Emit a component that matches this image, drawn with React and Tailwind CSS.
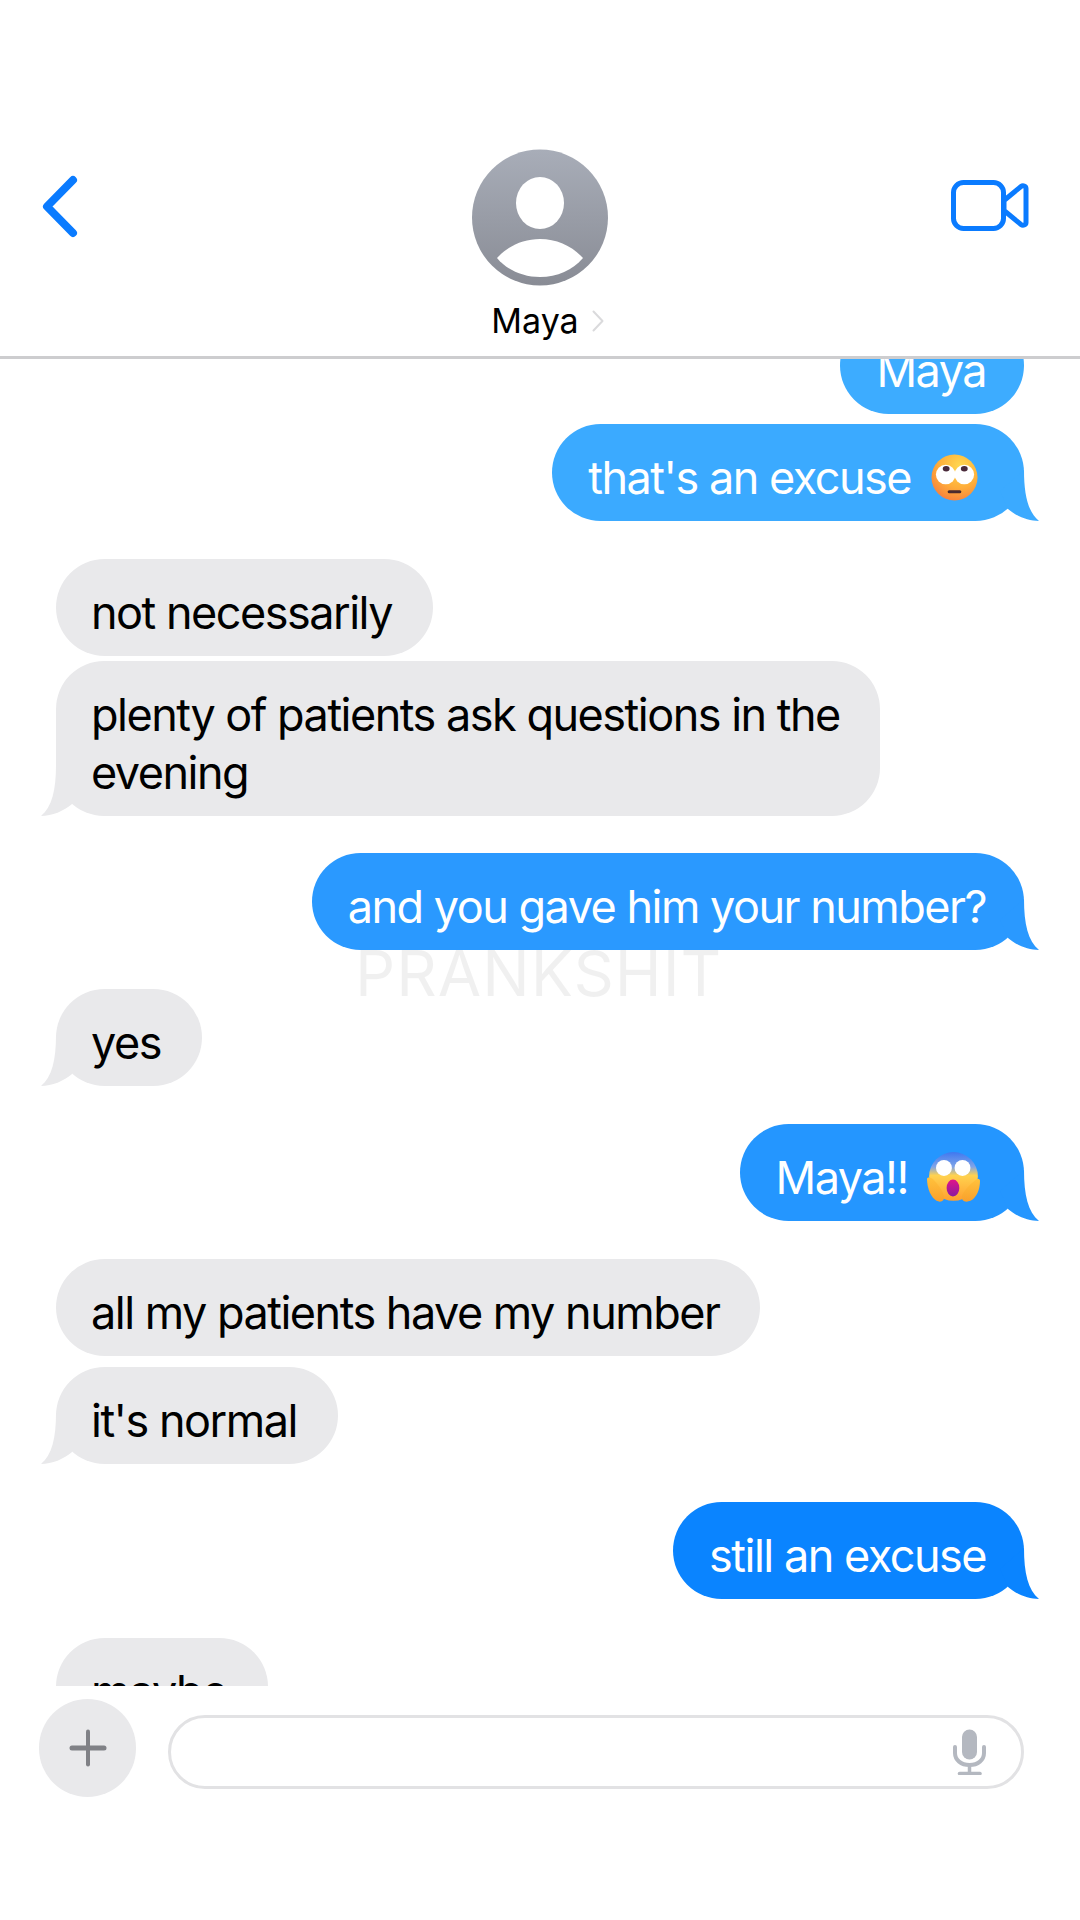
import React from "react";

function Tail({ side, fill }) {
  const pos = side === "right" ? "-right-[16px] bottom-0" : "-left-[16px] bottom-0 -scale-x-100";
  return (
    <svg viewBox="0 0 40 60" width="40" height="60" className={`absolute ${pos} ${fill}`}>
      <path d="M24 9C24 34 28 51 39 60C28 60 16 55 8 48L0 30Z" />
    </svg>
  );
}

function RollEyes() {
  return (
    <svg viewBox="0 0 48 48" width="47" height="47" className="ml-[20px] mr-[8px] shrink-0">
      <defs>
        <radialGradient id="re" cx="0.62" cy="0.25" r="0.85">
          <stop offset="0" stopColor="#FFD84F" />
          <stop offset="0.55" stopColor="#FFAE3A" />
          <stop offset="0.88" stopColor="#F8873C" />
          <stop offset="1" stopColor="#F06A7A" />
        </radialGradient>
      </defs>
      <circle cx="24" cy="24" r="23.5" fill="url(#re)" />
      <circle cx="15" cy="21" r="10" fill="#fff" />
      <circle cx="34" cy="21" r="10" fill="#fff" />
      <ellipse cx="15.5" cy="15" rx="3.5" ry="2.8" fill="#4A2A3A" />
      <ellipse cx="34" cy="15" rx="3.5" ry="2.8" fill="#4A2A3A" />
      <rect x="17" y="37" width="14" height="3.2" rx="1.6" fill="#4A2A2E" />
    </svg>
  );
}

function Scream() {
  return (
    <svg viewBox="0 0 50 50" width="53" height="53" className="ml-[19px] mr-[6px] shrink-0">
      <defs>
        <linearGradient id="sf" x1="0" y1="0" x2="0" y2="1">
          <stop offset="0" stopColor="#3F78F0" />
          <stop offset="0.3" stopColor="#7FA4E8" />
          <stop offset="0.48" stopColor="#FFD24F" />
          <stop offset="1" stopColor="#FF9F2E" />
        </linearGradient>
        <linearGradient id="sm" x1="0" y1="0" x2="0" y2="1">
          <stop offset="0" stopColor="#E0148A" />
          <stop offset="1" stopColor="#8A1AA0" />
        </linearGradient>
        <linearGradient id="sh" x1="0" y1="0" x2="0" y2="1">
          <stop offset="0" stopColor="#FFC23C" />
          <stop offset="1" stopColor="#F9A02C" />
        </linearGradient>
      </defs>
      <circle cx="25" cy="24" r="23" fill="url(#sf)" />
      <circle cx="16" cy="16" r="7.5" fill="#fff" />
      <circle cx="33.500" cy="16" r="7.5" fill="#fff" />
      <ellipse cx="24.500" cy="35" rx="6" ry="8" fill="url(#sm)" />
      <path d="M0 26C1 24 4 25 6 27C10 31 14 36 16 42C17 47 13 49 9 47C4 44 0 36 0 26Z" fill="url(#sh)" />
      <path d="M50 28C50 26 47 26 45 28C40 32 35 37 33 42C32 47 36 49 41 47C47 44 50 36 50 28Z" fill="url(#sh)" />
    </svg>
  );
}

const messages = [
  { side: "right", text: "Maya", bg: "bg-[#3DACFF]", fill: "fill-[#3DACFF]", mt: "-mt-[42px]" },
  { side: "right", text: "that's an excuse", emoji: <RollEyes />, bg: "bg-[#3BAAFF]", fill: "fill-[#3BAAFF]", mt: "mt-[10px]", tail: true },
  { side: "left", text: "not necessarily", mt: "mt-[38px]" },
  { side: "left", lines: ["plenty of patients ask questions in the", "evening"], mt: "mt-[5px]", tail: true },
  { side: "right", text: "and you gave him your number?", bg: "bg-[#2A99FF]", fill: "fill-[#2A99FF]", mt: "mt-[37px]", tail: true },
  { side: "left", text: "yes", mt: "mt-[39px]", tail: true },
  { side: "right", text: "Maya!!", emoji: <Scream />, bg: "bg-[#2496FF]", fill: "fill-[#2496FF]", mt: "mt-[38px]", tail: true },
  { side: "left", text: "all my patients have my number", mt: "mt-[38px]" },
  { side: "left", text: "it's normal", mt: "mt-[11px]", tail: true },
  { side: "right", text: "still an excuse", bg: "bg-[#0A84FF]", fill: "fill-[#0A84FF]", mt: "mt-[38px]", tail: true },
  { side: "left", text: "maybe", mt: "mt-[39px]" },
];

function Bubble({ m }) {
  const isRight = m.side === "right";
  const color = isRight ? `${m.bg} text-white self-end pl-[36px] pr-[38px]` : "bg-[#E9E9EB] text-black self-start pl-[35px] pr-[41px]";
  const size = m.lines
    ? "w-[824px] pt-[25px] pb-[15px] leading-[57.5px] rounded-[48px]"
    : "h-[97px] pt-[10px] flex items-center rounded-[48.5px] leading-[57px]";
  return (
    <div className={`relative shrink-0 text-[45px] tracking-[-1.5px] whitespace-nowrap ${color} ${size} ${m.mt}`}>
      {m.tail && <Tail side={m.side} fill={isRight ? m.fill : "fill-[#E9E9EB]"} />}
      {m.lines ? (
        m.lines.map((l) => (
          <div key={l} className="relative">
            {l}
          </div>
        ))
      ) : (
        <span className="relative">{m.text}</span>
      )}
      {m.emoji}
    </div>
  );
}

export default function App() {
  return (
    <div className="relative w-[1080px] h-[1920px] bg-white overflow-hidden flex flex-col font-['Inter','Liberation_Sans',sans-serif]">
      <header className="h-[359px] shrink-0 border-b-[3px] border-[#CDCDCF] pt-[149px] px-[38px] grid grid-cols-[1fr_auto_1fr]">
        <div className="justify-self-start">
          <svg viewBox="0 0 44 70" width="44" height="70" className="mt-[23px]" fill="none" stroke="#0A7BFF" strokeWidth="8" strokeLinecap="round" strokeLinejoin="round">
            <path d="M35 8L9 34.500L35 61" />
          </svg>
        </div>
        <div className="flex flex-col items-center">
          <svg viewBox="0 0 136 137" width="136" height="137">
            <defs>
              <linearGradient id="av" x1="0" y1="0" x2="0" y2="1">
                <stop offset="0" stopColor="#A8ADB8" />
                <stop offset="1" stopColor="#898C95" />
              </linearGradient>
            </defs>
            <circle cx="68" cy="68.5" r="68" fill="url(#av)" />
            <ellipse cx="68" cy="54" rx="24" ry="26" fill="#fff" />
            <path d="M25 109C36 97 51 90 68 90C85 90 100 97 111 109C101 121 85 128 68 128C51 128 35 121 25 109Z" fill="#fff" />
          </svg>
          <div className="mt-[14px] ml-[15px] flex items-center gap-[13px] text-[34px] leading-[42px] text-black">
            <span>Maya</span>
            <svg viewBox="0 0 12 22" width="12" height="22" fill="none" stroke="#DADADC" strokeWidth="2" strokeLinecap="round" strokeLinejoin="round">
              <path d="M1.500 1.500L10.500 11L1.500 20.500" />
            </svg>
          </div>
        </div>
        <div className="justify-self-end">
          <svg viewBox="0 0 78 52" width="78" height="52" className="mt-[31px] mr-[13px]" fill="none" stroke="#0A7BFF" strokeWidth="5" strokeLinejoin="round">
            <rect x="2.500" y="2.500" width="50" height="46" rx="10" />
            <path d="M53 20.500L70 6.500C72 5 75 6 75 8.500V42.500C75 45 72 46 70 44.500L53 30.500Z" />
          </svg>
        </div>
      </header>

      <main className="h-[1327px] shrink-0 overflow-hidden flex flex-col px-[56px]">
        {messages.map((m, i) => (
          <Bubble key={i} m={m} />
        ))}
      </main>

      <footer className="flex items-center pl-[39px] pr-[56px] pt-[13px] gap-[32px]">
        <div className="w-[97px] h-[98px] rounded-full bg-[#E9E9EB] flex items-center justify-center shrink-0">
          <svg viewBox="0 0 38 38" width="38" height="38" fill="#808186">
            <rect x="0.500" y="16.500" width="37" height="5" rx="2.500" />
            <rect x="17" y="0.500" width="4" height="37" rx="2" />
          </svg>
        </div>
        <div className="flex-1 h-[74px] mt-[8px] rounded-full border-[3px] border-[#E2E2E4] flex items-center justify-end pr-[34px]">
          <svg viewBox="0 0 34 46" width="34" height="46" fill="none" stroke="#B4B8C0">
            <rect x="9" y="0.500" width="15" height="30" rx="7.500" fill="#B4B8C0" stroke="none" />
            <path d="M2 18V24C2 31 8 36 16.500 36C25 36 31 31 31 24V18" strokeWidth="4" strokeLinecap="round" />
            <path d="M16.500 36V43" strokeWidth="3.500" />
            <path d="M6.500 44.500H27" strokeWidth="3.500" strokeLinecap="round" />
          </svg>
        </div>
      </footer>

      <div className="absolute left-[355px] top-[937px] text-[63px] leading-[72px] tracking-[1px] text-black/[0.06] whitespace-nowrap pointer-events-none">
        PRANKSHIT
      </div>
    </div>
  );
}
